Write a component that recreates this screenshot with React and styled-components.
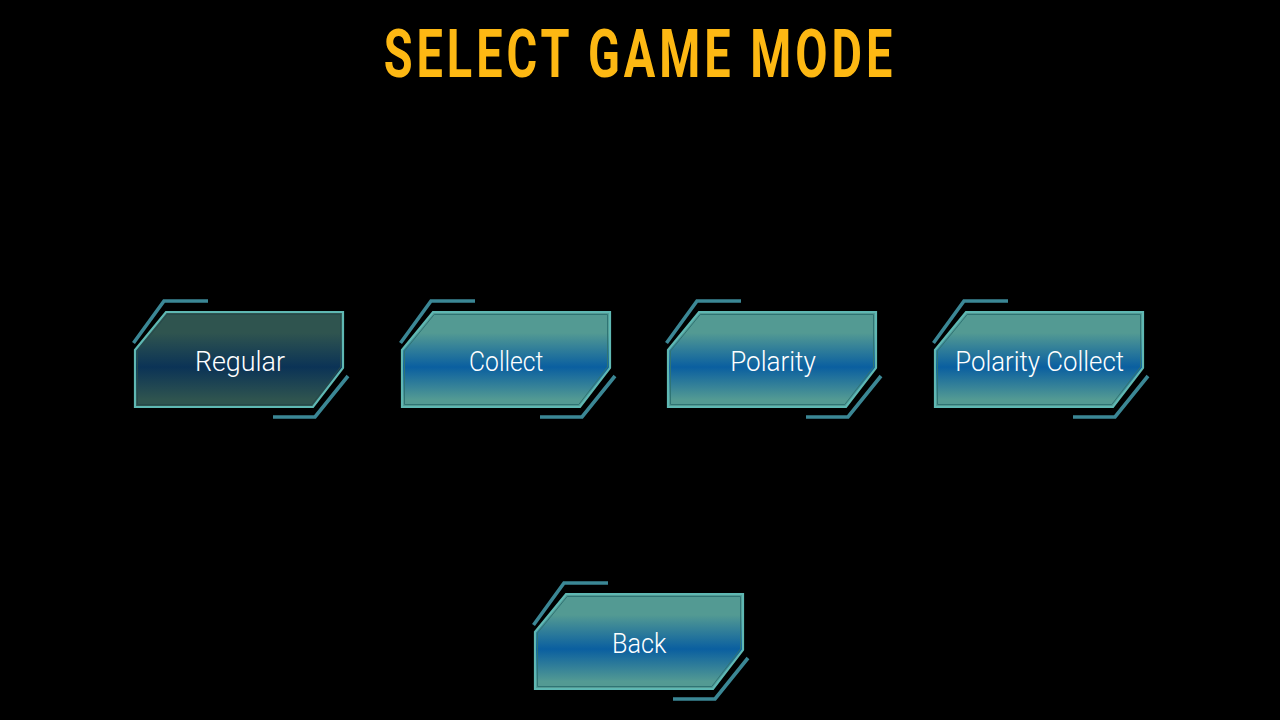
import React from "react";
import styled, { createGlobalStyle } from "styled-components";

const Global = createGlobalStyle`
  html, body { margin: 0; padding: 0; background: #000; }
  #root { width: 1280px; height: 720px; overflow: hidden; }
`;

const Page = styled.main`
  width: 1280px;
  height: 720px;
  background: #000;
  display: flex;
  flex-direction: column;
  align-items: center;
`;

const Title = styled.h1`
  margin: 15px 0 0;
  height: 80px;
  line-height: 80px;
  font-family: "Roboto", "Liberation Sans", sans-serif;
  font-weight: 700;
  font-size: 66px;
  letter-spacing: 5.6px;
  color: #fdb813;
  white-space: nowrap;
  transform: scaleX(0.71);
`;

const ModeRow = styled.div`
  margin-top: 204px;
  display: grid;
  grid-template-columns: repeat(4, 218px);
  column-gap: 48.67px;
  margin-left: 2px;
`;

const BackRow = styled.div`
  margin-top: 162px;
  margin-left: 2px;
`;

const ModeButton = styled.button`
  position: relative;
  width: 218px;
  height: 120px;
  padding: 5px 3px 0 0;
  border: 0;
  background: none;
  display: flex;
  align-items: center;
  justify-content: center;
  cursor: pointer;
`;

const Frame = styled.svg`
  position: absolute;
  inset: 0;
  width: 218px;
  height: 120px;
`;

const Label = styled.span`
  position: relative;
  font-family: "Roboto", "Liberation Sans", sans-serif;
  font-weight: 300;
  font-size: 28px;
  line-height: 32px;
  color: #fff;
  white-space: nowrap;
  transform: scaleX(${(p) => p.$squeeze});
`;

const palettes = {
  normal: { edge: "#539a93", mid: "#0a5fa0", inner: "#2f7474" },
  active: { edge: "#2f544f", mid: "#0b3356", inner: "#27494a" },
};

function Mode({ label, active, squeeze = 0.96 }) {
  const id = React.useId();
  const p = active ? palettes.active : palettes.normal;
  return (
    <ModeButton type="button">
      <Frame viewBox="0 0 218 120" fill="none" aria-hidden="true">
        <defs>
          <linearGradient id={id} x1="0" y1="13" x2="0" y2="108" gradientUnits="userSpaceOnUse">
            <stop offset="0" stopColor={p.edge} />
            <stop offset="0.22" stopColor={p.edge} />
            <stop offset="0.58" stopColor={p.mid} />
            <stop offset="0.92" stopColor={p.edge} />
            <stop offset="1" stopColor={p.edge} />
          </linearGradient>
        </defs>
        <path d="M3 51 L34 13 H211 V69 L181 108 H3 Z" fill={`url(#${id})`} stroke="#5fb8b3" strokeWidth="2.2" />
        <path d="M5.5 52 L35.2 15.5 H208.5 V68 L179.8 105.5 H5.5 Z" stroke={p.inner} strokeWidth="1" />
        <path d="M1.5 44 L32 2 H76" stroke="#3b8795" strokeWidth="3.6" />
        <path d="M216 77 L183 118 H141" stroke="#3b8795" strokeWidth="3.6" />
      </Frame>
      <Label $squeeze={squeeze}>{label}</Label>
    </ModeButton>
  );
}

export default function App() {
  return (
    <Page>
      <Global />
      <Title>SELECT GAME MODE</Title>
      <ModeRow>
        <Mode label="Regular" active />
        <Mode label="Collect" squeeze={0.88} />
        <Mode label="Polarity" squeeze={0.93} />
        <Mode label="Polarity Collect" squeeze={0.92} />
      </ModeRow>
      <BackRow>
        <Mode label="Back" squeeze={0.9} />
      </BackRow>
    </Page>
  );
}
